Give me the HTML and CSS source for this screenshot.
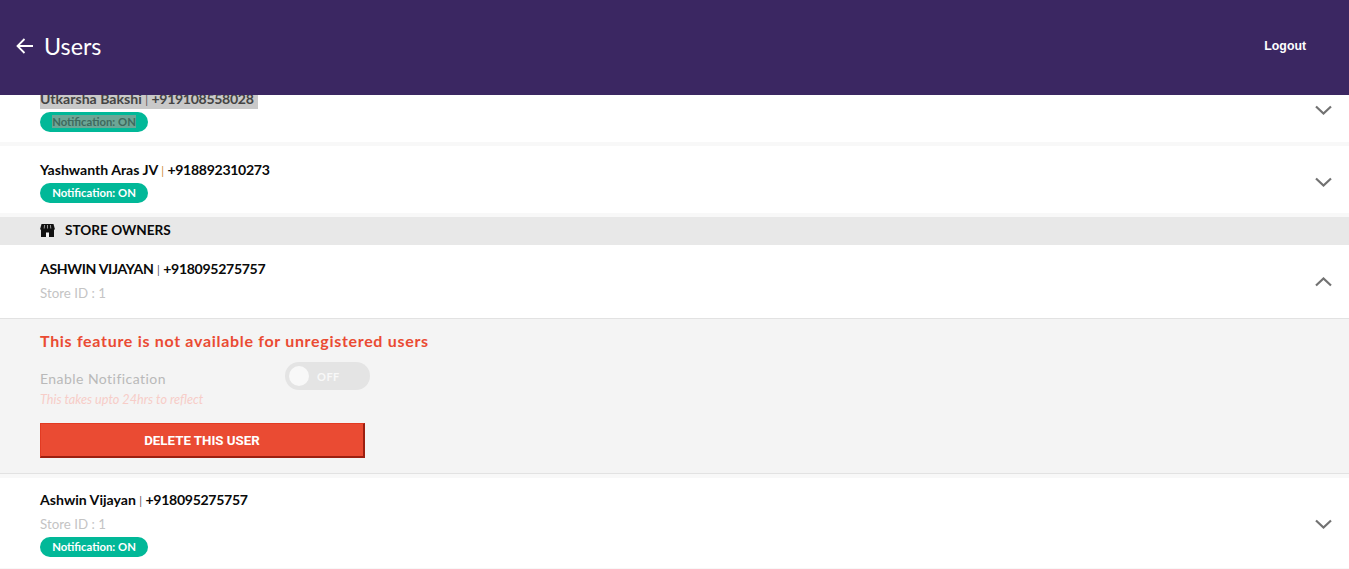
FILE: index.html

```html
<!DOCTYPE html>
<html lang="en">
<head>
    <meta charset="UTF-8">
    <meta name="viewport" content="width=device-width, initial-scale=1.0">
    <title>Users</title>
    <link rel="stylesheet" href="styles.css">
</head>
<body>
    <header class="topbar">
        <div class="topbar-title">
            <svg class="back-icon" width="17" height="16" viewBox="0 0 17 16"><path d="M17 8H1.500M8.500 1 1.500 8l7 7" fill="none" stroke="#fff" stroke-width="1.800"/></svg>
            <h1>Users</h1>
        </div>
        <a class="logout" href="#">Logout</a>
    </header>

    <main class="user-list">
        <div class="user-row user-row-pill">
            <div>
                <p class="user-name selected">Utkarsha Bakshi <span class="sep">|</span> <span class="phone">+919108558028</span></p>
                <span class="pill"><span class="pill-selected">Notification: ON</span></span>
            </div>
            <svg class="chevron" width="17" height="10" viewBox="0 0 17 10"><path d="M1 1.500 8.500 8.500 16 1.500" fill="none" stroke="#727272" stroke-width="2.200"/></svg>
        </div>
        <div class="user-row user-row-pill">
            <div>
                <p class="user-name">Yashwanth Aras JV <span class="sep orange">|</span> <span class="phone">+918892310273</span></p>
                <span class="pill">Notification: ON</span>
            </div>
            <svg class="chevron" width="17" height="10" viewBox="0 0 17 10"><path d="M1 1.500 8.500 8.500 16 1.500" fill="none" stroke="#727272" stroke-width="2.200"/></svg>
        </div>

        <div class="section-head">
            <svg width="15" height="13" viewBox="0 0 15 13">
                <path d="M1 5h13v8H1z" fill="#111"/>
                <path d="M1.500 0h12L15 5.500H0z" fill="#111"/>
                <path d="M4.600 1 4.200 4.500M7.500 1v3.500M10.400 1l.4 3.500" stroke="#bbb" stroke-width=".8"/>
                <path d="M6 8.500h3V13H6z" fill="#f4f4f4"/>
            </svg>
            <span>STORE OWNERS</span>
        </div>

        <div class="user-row user-row-open">
            <div>
                <p class="user-name"><span class="caps">ASHWIN VIJAYAN</span> <span class="sep">|</span> <span class="phone">+918095275757</span></p>
                <p class="store-id">Store ID : 1</p>
            </div>
            <svg class="chevron" width="17" height="10" viewBox="0 0 17 10"><path d="M1 8.500 8.500 1.500 16 8.500" fill="none" stroke="#727272" stroke-width="2.200"/></svg>
        </div>
        <div class="user-panel">
            <p class="panel-warning">This feature is not available for unregistered users</p>
            <div class="notify-line">
                <div class="notify-label">
                    <p class="notify-title">Enable Notification</p>
                    <p class="notify-hint">This takes upto 24hrs to reflect</p>
                </div>
                <div class="toggle"><span class="toggle-knob"></span><span class="toggle-text">OFF</span></div>
            </div>
            <button class="delete-btn">DELETE THIS USER</button>
        </div>

        <div class="user-row user-row-last">
            <div>
                <p class="user-name">Ashwin Vijayan <span class="sep">|</span> <span class="phone">+918095275757</span></p>
                <p class="store-id">Store ID : 1</p>
                <span class="pill">Notification: ON</span>
            </div>
            <svg class="chevron" width="17" height="10" viewBox="0 0 17 10"><path d="M1 1.500 8.500 8.500 16 1.500" fill="none" stroke="#727272" stroke-width="2.200"/></svg>
        </div>
    </main>
</body>
</html>
```

FILE: styles.css

```css
* { margin: 0; padding: 0; box-sizing: border-box; }
html, body { height: 569px; overflow: hidden; }
body { font-family: Lato, "Open Sans", sans-serif; background: #f8f8f8; color: #0a0a0a; }

.topbar {
    position: relative; z-index: 2;
    display: flex; justify-content: space-between; align-items: center;
    height: 95px; padding: 0 43px 4px 16px;
    background: #3b2762; color: #fff;
}
.topbar-title { display: flex; align-items: center; gap: 11px; }
.topbar-title h1 { font-size: 23.300px; font-weight: 400; }
.logout {
    font-family: "Liberation Sans", Arial, sans-serif;
    font-size: 12.300px; font-weight: bold; color: #fff; text-decoration: none;
}

.user-list { margin-top: -23px; }
.user-row {
    display: flex; justify-content: space-between; align-items: center;
    padding: 0 17px 0 40px; background: #fff; margin-bottom: 4px;
    height: 67px;
}
.user-row-pill { padding-top: 5px; }
.user-list > .user-row:first-child { height: 70px; }
.user-name { font-size: 14.100px; font-weight: 700; line-height: 18px; color: #0a0a0a; }
.phone { letter-spacing: -.32px; }
.caps { letter-spacing: -.35px; }
.sep { font-weight: 400; font-size: 11px; color: #555; }
.sep.orange { color: #c98a3a; }
.selected { display: inline-block; background: #c9c9c9; padding-right: 4px; color: #444; }
.pill {
    display: block; width: 108px; height: 20px; margin-top: 3px;
    border-radius: 10px; background: #01b898;
    font-size: 11.300px; font-weight: 700; line-height: 20px; text-align: center; color: #fff;
}
.pill-selected { background: #6ca696; color: #3e6a5e; }
.chevron { flex: none; }

.section-head {
    display: flex; align-items: center; gap: 10px;
    height: 28px; padding: 0 0 2px 40px; background: #e8e8e8;
    font-size: 13.600px; font-weight: 700; color: #0a0a0a;
}

.user-row-open { height: 73px; margin-bottom: 0; }
.store-id { font-size: 13.300px; line-height: 18px; margin-top: 5px; color: #c4c4c4; }
.user-row-open .store-id { margin-bottom: 1px; }

.user-panel {
    height: 156px; padding: 13px 40px 0;
    background: #f4f4f4;
    border-top: 1px solid #e2e2e2; border-bottom: 1px solid #e2e2e2;
    margin-bottom: 4px;
}
.panel-warning { font-size: 16px; font-weight: 700; line-height: 18px; letter-spacing: .69px; color: #ea4b33; }
.notify-line { display: flex; align-items: flex-start; gap: 81px; margin-top: 12px; }
.notify-label { width: 164px; }
.notify-title { font-size: 14px; line-height: 18px; margin-top: 8px; letter-spacing: .45px; color: #b9b9b9; }
.notify-hint { font-size: 12.700px; font-style: italic; line-height: 14px; margin-top: 4px; color: #f7cdc8; }
.toggle {
    display: flex; align-items: center; gap: 8px;
    width: 85px; height: 28px; padding-left: 4px;
    border-radius: 14px; background: #e4e4e4;
}
.toggle-knob { width: 20px; height: 20px; border-radius: 50%; background: #f8f8f8; }
.toggle-text { font-size: 11px; font-weight: 700; color: #f8f8f8; letter-spacing: .5px; }
.delete-btn {
    display: block; width: 325px; height: 35px; margin-top: 17px;
    border: 1px solid #e23a22; border-right: 2px solid #9c1f10; border-bottom: 2px solid #9c1f10;
    background: #ea4b33; color: #fff;
    font-family: Roboto, Arial, sans-serif; font-size: 13.300px; font-weight: 700;
}
.user-row-last { height: 90px; padding-top: 1px; }
.user-row-last .pill { margin-top: 4px; }
```
